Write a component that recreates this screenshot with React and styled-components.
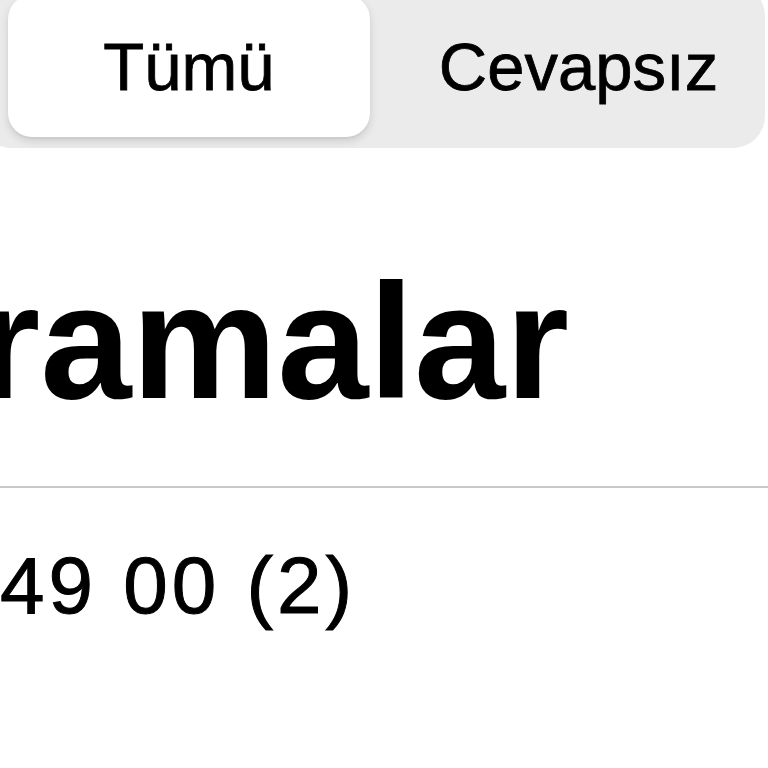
import React from 'react'
import styled, { createGlobalStyle } from 'styled-components'

const GlobalStyle = createGlobalStyle`
  html, body {
    margin: 0;
    padding: 0;
    background: #ffffff;
  }
  body {
    font-family: 'Liberation Sans', Arial, sans-serif;
    color: #000;
  }
`

const Screen = styled.div`
  width: 768px;
  height: 768px;
  overflow: hidden;
  background: #fff;
  display: flex;
  flex-direction: column;
`

const Segmented = styled.div`
  display: flex;
  align-items: stretch;
  margin: -16px 0 0 -20px;
  width: 785px;
  height: 164px;
  box-sizing: border-box;
  padding: 11px 0 11px 28px;
  background: #ebebeb;
  border-radius: 32px;
`

const Segment = styled.div`
  display: flex;
  align-items: center;
  justify-content: center;
  box-sizing: border-box;
  width: ${p => (p.$active ? '362px' : 'auto')};
  flex: ${p => (p.$active ? '0 0 auto' : '1')};
  padding-left: ${p => (p.$active ? '0' : '22px')};
  background: ${p => (p.$active ? '#ffffff' : 'transparent')};
  border-radius: 24px;
  box-shadow: ${p =>
    p.$active ? '0 4px 8px rgba(0,0,0,0.13), 0 2px 2px rgba(0,0,0,0.04)' : 'none'};
  font-size: 67px;
  line-height: 1;
  color: #000;
  -webkit-text-stroke: 0.8px #000;
`

const Title = styled.h1`
  margin: 112px 0 0 -142px;
  font-size: 164px;
  line-height: 1;
  font-weight: 700;
  white-space: nowrap;
  color: #000;
`

const Divider = styled.div`
  margin-top: 62px;
  height: 2px;
  background: #c8c8c8;
`

const Row = styled.div`
  margin: 58px 0 0 0;
  font-size: 80px;
  line-height: 1;
  letter-spacing: 4px;
  white-space: nowrap;
  color: #000;
  -webkit-text-stroke: 1px #000;
`

export default function App() {
  return (
    <>
      <GlobalStyle />
      <Screen>
        <Segmented>
          <Segment $active>Tümü</Segment>
          <Segment>Cevapsız</Segment>
        </Segmented>
        <Title>Aramalar</Title>
        <Divider />
        <Row>49 00 (2)</Row>
      </Screen>
    </>
  )
}
